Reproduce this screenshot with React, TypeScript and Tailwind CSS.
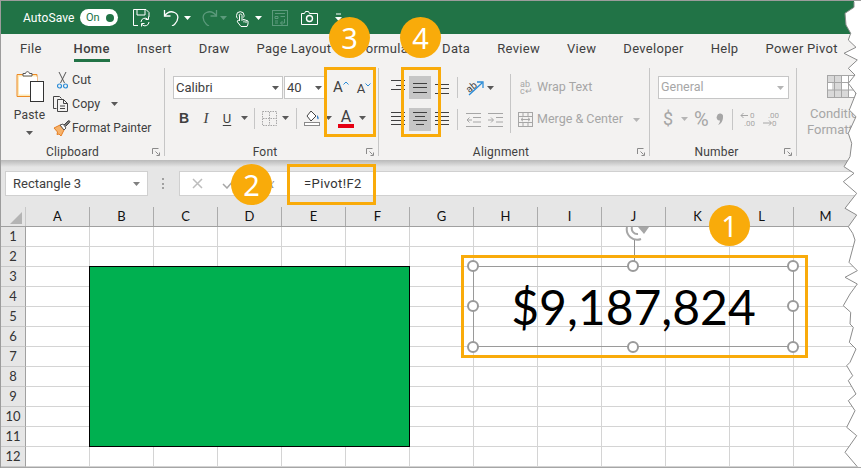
import React from "react";

const UI = "font-['Roboto','Noto_Sans',sans-serif]";
const cols = ["A","B","C","D","E","F","G","H","I","J","K","L","M","N"];
const rows = [1,2,3,4,5,6,7,8,9,10,11,12];

const Caret = ({ c = "#595959", cls = "" }: { c?: string; cls?: string }) => (
  <svg width="7" height="4" viewBox="0 0 7 4" className={cls}><path d="M0 0h7L3.500 4z" fill={c} /></svg>
);

const Launcher = () => (
  <svg width="8" height="8" viewBox="0 0 8 8" fill="none" stroke="#8a8a8a"><path d="M.5 6V.5H6.500" /><path d="M3.500 3.500l3 3M7.500 4.500v3h-3" /></svg>
);

const Lines = ({ ys, aligns, c = "#404040", w = 14 }: { ys: number[]; aligns: [number, number][]; c?: string; w?: number }) => (
  <svg width={w} height="20" viewBox={`0 0 ${w} 20`} stroke={c}>
    {ys.map((y, i) => <path key={i} d={`M${aligns[i][0]} ${y + 0.5}H${aligns[i][1]}`} />)}
  </svg>
);

const Group = ({ w, label, pr, children }: { w: string; label: string; pr: string; children: React.ReactNode }) => (
  <div className={`flex flex-col shrink-0 ${w}`}>
    <div className="h-[80px] flex">{children}</div>
    <div className="h-[16px] flex items-center">
      <div className={`flex-1 text-center text-[12px] tracking-[0.2px] leading-none text-[#404040] ${pr}`}>{label}</div>
      <div className="w-[8px] mr-[4px] flex"><Launcher /></div>
    </div>
  </div>
);

const Sep = () => <div className="w-px h-[88px] mt-[4px] bg-[#c6c6c6] shrink-0" />;
const SmallSep = ({ cls }: { cls: string }) => <div className={`w-px h-[21px] bg-[#c6c6c6] shrink-0 ${cls}`} />;

const TitleBar = () => (
  <div className="h-[33px] bg-[#217346] flex items-center shrink-0 text-white">
    <span className="ml-[22px] w-[50px] text-[12px] tracking-[0.1px] leading-none whitespace-nowrap">AutoSave</span>
    <div className="ml-[7px] w-[38px] h-[17px] rounded-full bg-white flex items-center justify-between pl-[6px] pr-[4px]">
      <span className="text-[11px] leading-none text-[#217346]">On</span>
      <span className="w-[8px] h-[8px] rounded-full bg-[#217346]" />
    </div>
    <svg className="ml-[15px]" width="17" height="18" viewBox="0 0 17 18" fill="none" stroke="#fff">
      <path d="M5 16.500H.5V.5H13l3 3V8" /><path d="M4 .5V6h8V.5" /><path d="M8 13a4 4 0 0 1 7-2.500M16 13a4 4 0 0 1-7 2.500" /><path d="M15.500 7.500v3h-3M8.500 17.500v-3h3" />
    </svg>
    <svg className="ml-[13px]" width="17" height="17" viewBox="0 0 17 17" fill="none" stroke="#fff" strokeWidth="1.300">
      <path d="M1.500 1v6h6" /><path d="M1.500 7C4 3.500 8 2 11.500 3.500c4.500 2 4.500 7.500 0 12L9 17" />
    </svg>
    <Caret c="#fff" cls="ml-[4px]" />
    <svg className="ml-[10px]" width="17" height="17" viewBox="0 0 17 17" fill="none" stroke="#5c9a7c" strokeWidth="1.300">
      <path d="M15.500 1v6h-6" /><path d="M15.500 7C13 3.500 9 2 5.500 3.500c-4.500 2-4.500 7.500 0 12L8 17" />
    </svg>
    <Caret c="#5c9a7c" cls="ml-[2px]" />
    <svg className="ml-[7px]" width="16" height="18" viewBox="0 0 16 18" fill="none" stroke="#fff">
      <path d="M3.500 9.500a4 4 0 0 1-1-3 3.800 3.800 0 0 1 7.600 0 4 4 0 0 1-.6 2" /><path d="M5 6.500c0-2 3-2 3 0v5l1-1 1 0 4 1.500V15l-1 2.500H7L3.500 13c-.8-1.500 1-2.500 2-1V6.500z" fill="#217346" /><path d="M10 11.500v2M12 12v2" />
    </svg>
    <Caret c="#fff" cls="ml-[5px]" />
    <svg className="ml-[10px]" width="16" height="16" viewBox="0 0 16 16" fill="none" stroke="#5c9a7c">
      <rect x=".5" y=".5" width="15" height="15" /><path d="M3 3.500h10M3 6.500h3v2H3zM8.500 6.500H13M3 11h3M3 13h3M12.500 9v4H8.500M10.500 11l-2 2 2 2" />
    </svg>
    <svg className="ml-[13px]" width="17" height="14" viewBox="0 0 17 14" fill="none" stroke="#fff">
      <path d="M.5 2.500h3l1-2h3l1 2h8v11H.5z" /><circle cx="8.500" cy="7.500" r="3" strokeWidth="1.400" />
    </svg>
    <svg className="ml-[17px]" width="7" height="9" viewBox="0 0 7 9"><path d="M1 .5h5V1.500H1z M0 4h7L3.500 8z" fill="#fff" /></svg>
  </div>
);

const Tabs = () => (
  <div className="h-[30px] flex items-start shrink-0 text-[13px] leading-none text-[#404040] pl-[19px] tracking-[0.3px] whitespace-nowrap">
    <span className="mt-[8px] mr-[32px]">File</span>
    <div className="flex gap-[27px]">
      <div className="flex flex-col h-[28px] pt-[8px] border-b-[3px] border-[#217346] font-medium text-[#404040]">Home</div>
      {["Insert","Draw","Page Layout","Formulas","Data","Review","View","Developer","Help","Power Pivot"].map(t => <span key={t} className="mt-[8px]">{t}</span>)}
    </div>
  </div>
);

const Clipboard = () => (
  <Group w="w-[163px]" label="Clipboard" pr="pr-[8px]">
    <div className="w-[52px] pl-[5px] flex flex-col items-center pt-[6px] shrink-0">
      <svg width="28" height="32" viewBox="0 0 28 32" fill="none">
        <path d="M1 4.500h20v22H1z" fill="#fde9b8" stroke="#ed8a24" />
        <path d="M3 6.500h18v18H3z" fill="#fff" />
        <path d="M7 6V3.500h2.500c.5-2.500 3.500-2.500 4 0H16V6H7z" fill="#fff" stroke="#555" />
        <rect x="14.500" y="11.500" width="13" height="20" fill="#fff" stroke="#333" />
      </svg>
      <span className="text-[12px] tracking-[0.2px] leading-none mt-[7px] text-[#404040]">Paste</span>
      <Caret cls="mt-[10px]" />
    </div>
    <div className="flex flex-col pt-[4px] text-[12px] leading-none text-[#404040]">
      <div className="h-[24px] flex items-center">
        <div className="w-[19px] flex justify-center">
          <svg width="11" height="17" viewBox="0 0 11 17" fill="none"><path d="M2 0l5.500 11M9 0L3.500 11" stroke="#555" /><circle cx="2.500" cy="14" r="2" stroke="#2b8cd6" strokeWidth="1.200" /><circle cx="8.500" cy="14" r="2" stroke="#2b8cd6" strokeWidth="1.200" /></svg>
        </div>
        <span className="text-[12.5px]">Cut</span>
      </div>
      <div className="h-[24px] flex items-center">
        <div className="w-[19px]">
          <svg width="16" height="16" viewBox="0 0 16 16" fill="none" stroke="#444"><path d="M3.500 12.500H.5V.5h6l2 2" /><path d="M4.500 3.500h6l4 4v8h-10zM10.500 3.500v4h4M7 10h5M7 12.500h5" /></svg>
        </div>
        <span className="text-[12.5px]">Copy</span>
        <Caret cls="ml-[11px]" />
      </div>
      <div className="h-[24px] flex items-center">
        <div className="w-[19px]">
          <svg width="18" height="16" viewBox="0 0 18 16" fill="none"><path d="M1 8l6-3 4 5-3 6-2-2-2 .5.5-2.500z" fill="#f6b26b" stroke="#e67e22" /><path d="M7 5l4 5 2-2-3-4z" fill="#fff" stroke="#555" /><path d="M11 5l4-4c1.500-1 2.500.5 1.500 1.500l-4 4" fill="#777" stroke="#444" /></svg>
        </div>
        <span className="whitespace-nowrap">Format Painter</span>
      </div>
    </div>
  </Group>
);

const Font = () => (
  <Group w="w-[213px]" label="Font" pr="pr-[1px]">
    <div className="flex flex-col pt-[12px] pl-[8px]">
      <div className="flex items-center">
        <div className="w-[110px] h-[23px] bg-white border border-[#c6c6c6] flex items-center justify-between pl-[2px] pr-[3px] text-[13px] text-[#404040]">
          <span>Calibri</span><Caret />
        </div>
        <div className="ml-px w-[40px] h-[23px] bg-white border border-[#c6c6c6] border-r-0 flex items-center justify-between pl-[2px] pr-[2px] text-[13px] text-[#404040]">
          <span>40</span><Caret />
        </div>
        <div className="ml-[9px] flex items-start text-[15px] leading-none text-[#404040]">
          <span>A</span>
          <svg className="mt-[1px]" width="6" height="4" viewBox="0 0 6 4" fill="none" stroke="#2b8cd6"><path d="M.5 3.500L3 1l2.500 2.500" /></svg>
        </div>
        <div className="ml-[8px] flex items-start text-[13px] leading-none text-[#404040] pt-[1px]">
          <span>A</span>
          <svg className="mt-[1px]" width="6" height="4" viewBox="0 0 6 4" fill="none" stroke="#2b8cd6"><path d="M.5 .5L3 3l2.500-2.500" /></svg>
        </div>
      </div>
      <div className="flex items-center h-[22px] mt-[8px] -ml-[8px] pl-[10px] text-[#404040]">
        <span className="w-[18px] text-center font-['Liberation_Sans'] font-bold text-[14px] leading-none">B</span>
        <span className="w-[18px] ml-[4px] text-center font-['Liberation_Serif'] italic text-[15px] leading-none">I</span>
        <span className="w-[18px] ml-[3px] text-center text-[13px] leading-none underline underline-offset-2">U</span>
        <Caret cls="ml-[5px]" />
        <SmallSep cls="ml-[6px]" />
        <svg className="ml-[7px]" width="15" height="15" viewBox="0 0 15 15" fill="none" stroke="#a6a6a6" strokeDasharray="1.500 1"><rect x=".5" y=".5" width="14" height="14" /><path d="M7.500 1v13M1 7.500h13" /></svg>
        <Caret cls="ml-[5px]" />
        <SmallSep cls="ml-[7px]" />
        <svg className="ml-[7px]" width="16" height="16" viewBox="0 0 16 16" fill="none"><path d="M7 1l5 5-5 5-4-5z" stroke="#444" fill="#fff" /><path d="M13 5c2 2 2 4 1 4.500-1-.5-1-2.500-1-4.500z" fill="#2b78c2" /><rect x=".5" y="12.500" width="15" height="3" stroke="#8a8a8a" fill="#fff" /></svg>
        <Caret cls="ml-[5px]" />
        <div className="ml-[6px] flex flex-col items-center w-[16px]">
          <span className="text-[16px] leading-[15px] text-[#404040]">A</span>
          <div className="w-[16px] h-[4px] bg-[#e60012]" />
        </div>
        <Caret cls="ml-[5px]" />
      </div>
    </div>
  </Group>
);

const Alignment = () => {
  const full: [number, number] = [0, 14];
  return (
    <Group w="w-[270px]" label="Alignment" pr="pr-[14px]">
      <div className="flex flex-col pt-[12px] pl-[12px] shrink-0">
        <div className="flex items-center h-[23px]">
          <div className="-mt-[2px] flex"><Lines ys={[3, 8, 12]} aligns={[full, [5, 14], full]} /></div>
          <div className="ml-[4px] w-[22px] h-[23px] bg-[#c6c6c6] flex items-center justify-center"><Lines ys={[5, 9, 14]} aligns={[full, full, full]} /></div>
          <div className="ml-[4px] flex"><Lines ys={[6, 10, 15]} aligns={[full, [4, 14], full]} /></div>
          <SmallSep cls="ml-[8px]" />
          <svg className="ml-[8px]" width="22" height="18" viewBox="0 0 22 18" fill="none"><text x="0" y="11" fontSize="10" fill="#404040" transform="rotate(-40 6 8)">ab</text><path d="M3 16L16 4M11 3h6v6" stroke="#2b8cd6" strokeWidth="1.300" /></svg>
          <Caret cls="ml-[-1px]" />
        </div>
        <div className="flex items-center h-[23px] mt-[9px]">
          <Lines ys={[2, 6, 10, 14]} aligns={[full, [0, 14], full, [0, 14]]} />
          <div className="ml-[4px] w-[22px] h-[23px] bg-[#c6c6c6] flex items-center justify-center"><Lines ys={[2, 6, 10, 14]} aligns={[full, [2, 12], full, [3, 11]]} /></div>
          <div className="ml-[4px]"><Lines ys={[2, 6, 10, 14]} aligns={[full, [0, 14], full, [0, 14]]} /></div>
          <SmallSep cls="ml-[8px]" />
          <svg className="ml-[8px]" width="15" height="14" viewBox="0 0 15 14" fill="none" stroke="#a6a6a6"><path d="M0 .5h15M7 4.500h8M7 9h8M0 13.500h15M6 7H1M3.500 4.500L1 7l2.500 2.500" /></svg>
          <svg className="ml-[7px]" width="15" height="14" viewBox="0 0 15 14" fill="none" stroke="#a6a6a6"><path d="M0 .5h15M8 4.500h7M8 9h7M0 13.500h15M0 7h5M3 4.500L5.500 7 3 9.500" /></svg>
        </div>
      </div>
      <div className="w-px h-[59px] bg-[#c6c6c6] mt-[10px] ml-[7px] shrink-0" />
      <div className="flex flex-col pt-[12px] text-[12.5px] leading-none text-[#a6a6a6] pl-[7px]">
        <div className="flex items-center h-[23px] whitespace-nowrap">
          <span className="ml-[2px] w-[17px] text-[9px] leading-[7px]">ab<br />c↵</span>
          <span>Wrap Text</span>
        </div>
        <div className="flex items-center h-[23px] mt-[9px] whitespace-nowrap">
          <svg className="mr-[4px]" width="15" height="15" viewBox="0 0 15 15" fill="none" stroke="#a6a6a6"><rect x=".5" y=".5" width="14" height="14" /><path d="M1 4.500h13M1 10.500h13M5 1v3.500M10 1v3.500M5 10.500V14M10 10.500V14M3 7.500h9M5 5.800L3 7.500l2 1.700M10 5.800l2 1.700-2 1.700" /></svg>
          <span>Merge &amp; Center</span>
          <Caret c="#b5b5b5" cls="ml-[10px]" />
        </div>
      </div>
    </Group>
  );
};

const NumberGroup = () => (
  <Group w="w-[146px]" label="Number" pr="pr-[1px]">
    <div className="flex flex-col pt-[12px] pl-[8px] text-[#a6a6a6]">
      <div className="w-[131px] h-[23px] bg-white border border-[#c6c6c6] flex items-center justify-between pl-[2px] pr-[4px] text-[12.5px]">
        <span>General</span><Caret c="#b5b5b5" />
      </div>
      <div className="flex items-center h-[22px] mt-[9px]">
        <span className="ml-[5px] w-[10px] text-[18px] leading-none">$</span>
        <Caret c="#b5b5b5" cls="ml-[8px]" />
        <span className="ml-[6px] w-[17px] text-[20px] leading-none">%</span>
        <svg className="ml-[5px]" width="8" height="13" viewBox="0 0 8 13"><path d="M1 3a3 3 0 1 1 6 1c0 4-2 7-5 8 1.500-2 2-3 2-4.500A3 3 0 0 1 1 3z" fill="#a6a6a6" /></svg>
        <SmallSep cls="ml-[8px]" />
        <svg className="ml-[7px]" width="16" height="16" viewBox="0 0 16 16" fill="none" stroke="#a6a6a6"><path d="M8 4.500H1M3.500 2L1 4.500 3.500 7" /><text x="10" y="7" fontSize="8" fill="#a6a6a6" stroke="none">0</text><text x="4" y="15" fontSize="8" fill="#a6a6a6" stroke="none">.00</text></svg>
        <svg className="ml-[7px]" width="16" height="16" viewBox="0 0 16 16" fill="none" stroke="#a6a6a6"><text x="5" y="7" fontSize="8" fill="#a6a6a6" stroke="none">.00</text><path d="M0 12h8M6 9.500L8.500 12 6 14.500" /><text x="9" y="15" fontSize="8" fill="#a6a6a6" stroke="none">0</text></svg>
      </div>
    </div>
  </Group>
);

const Styles = () => (
  <div className="ml-[10px] flex flex-col text-[13px] leading-none text-[#a6a6a6] whitespace-nowrap">
    <svg className="ml-[20px] mt-[11px]" width="29" height="23" viewBox="0 0 29 23" fill="none" stroke="#a6a6a6">
      <rect x=".5" y=".5" width="28" height="22" fill="#fff" />
      <path d="M1 1h14v7H1z M5 8h9v7H5z M1 15h20v7H1z" fill="#d9d9d9" stroke="none" />
      <path d="M1 7.500h28M1 15h28M7.500 1v22M14.500 1v22M21.500 1v22" />
    </svg>
    <span className="ml-[3px] mt-[9px]">Conditional</span>
    <span className="mt-[3px]">Formatting</span>
  </div>
);

const FormulaBar = () => (
  <div className="h-[40px] bg-[#e6e6e6] flex items-start pt-[4px] shrink-0 pl-[4px]">
    <div className="w-[143px] h-[25px] bg-white border border-[#d0d0d0] flex items-center justify-between pl-[7px] pr-[7px] text-[13px] text-[#404040]">
      <span>Rectangle 3</span><Caret c="#808080" />
    </div>
    <svg className="ml-[13px] mt-[6px]" width="4" height="13" viewBox="0 0 4 13"><path d="M1 1h2v2H1zM1 6h2v2H1zM1 10h2v2H1z" fill="#a0a0a0" /></svg>
    <div className="ml-[14px] w-[113px] h-[25px] bg-white border border-[#d0d0d0] flex items-center pl-[12px]">
      <svg width="11" height="11" viewBox="0 0 11 11" stroke="#bdbdbd" strokeWidth="1.500"><path d="M1 1l9 9M10 1l-9 9" /></svg>
      <svg className="ml-[19px]" width="13" height="10" viewBox="0 0 13 10" fill="none" stroke="#a6a6a6" strokeWidth="1.500"><path d="M1 5l4 4 7-8" /></svg>
      <span className="ml-[29px] font-['Liberation_Serif'] italic text-[14px] leading-none text-[#8a8a8a]">fx</span>
    </div>
    <div className="ml-[-1px] flex-1 h-[25px] bg-white border-y border-[#d0d0d0] flex items-center pl-[13px] text-[13px] tracking-[0.4px] leading-none text-[#333]">=Pivot!F2</div>
  </div>
);

const Sheet = () => (
  <div className="flex flex-col bg-white border-b-2 border-[#a6a6a6]">
    <div className="flex h-[20px] bg-[#e6e6e6] border-b border-[#a0a0a0] items-stretch font-['Lato'] text-[13px] leading-none text-[#111] overflow-hidden">
      <div className="w-[25px] shrink-0 border-r border-[#c8c8c8] flex items-end justify-end pr-[3px] pb-[2px]">
        <svg width="12" height="12" viewBox="0 0 12 12"><path d="M12 0v12H0z" fill="#b4b4b4" /></svg>
      </div>
      {cols.map(c => (
        <div key={c} className="w-[64px] shrink-0 border-r border-[#ababab] flex items-center justify-center">{c}</div>
      ))}
    </div>
    {rows.map(r => (
      <div key={r} className="flex h-[20px]">
        <div className="w-[25px] shrink-0 bg-[#e6e6e6] border-r border-b border-r-[#a0a0a0] border-b-[#c8c8c8] flex items-center justify-center font-['Lato'] text-[13px] leading-none text-[#333]">{r}</div>
        {cols.map(c => <div key={c} className="w-[64px] shrink-0 border-r border-b border-[#d4d4d4]" />)}
      </div>
    ))}
  </div>
);

const Badge = ({ n, cls }: { n: number; cls: string }) => (
  <div className={`absolute w-[41px] h-[41px] rounded-full bg-[#f9ab0a] text-white flex items-center justify-center font-['Noto_Sans'] text-[29px] leading-none ${cls}`}>{n}</div>
);

const edge: [number, number][] = [
  [222,5],[222,22],[195,40],[198,75],[212,100],[205,120],[228,142],[192,160],[232,180],[205,205],[225,225],[205,250],[228,280],[208,330],[228,350],[205,400],[215,430],[210,470],[192,500],[222,520],[190,545],[230,580],[195,625],[230,645],[205,680],[218,700],
];
const edge2: [number, number][] = [
  [225,720],[207,787],[232,812],[195,832],[232,852],[210,882],[190,917],[212,937],[210,972],[220,982],[208,1027],[228,1047],[210,1087],[200,1097],[218,1127],[205,1142],[228,1182],[205,1202],[225,1232],[200,1282],[230,1307],[195,1357],[232,1400],
];
const torn = [...edge, ...edge2].map(([x, y]) => `${(x / 3).toFixed(1)},${(y / 3).toFixed(1)}`).join(" ");

export default function App() {
  return (
    <div className={`relative w-[861px] h-[468px] overflow-hidden bg-white border-l border-t border-[#9c9c9c] flex flex-col ${UI}`}>
      <TitleBar />
      <div className="h-[126px] bg-[#f3f2f1] shrink-0 flex flex-col overflow-hidden">
        <Tabs />
        <div className="flex h-[96px]">
          <Clipboard /><Sep /><Font /><Sep /><Alignment /><Sep /><NumberGroup /><Sep /><Styles />
        </div>
      </div>
      <div className="h-[7px] bg-gradient-to-b from-[#b9b9b9] to-[#e6e6e6] shrink-0" />
      <FormulaBar />
      <Sheet />

      {/* shapes on the sheet */}
      <div className="absolute left-[88px] top-[265px] w-[321px] h-[181px] bg-[#00b050] border border-black" />
      <svg className="absolute left-[600px] top-[226px]" width="60" height="40" viewBox="600 227 60 40" fill="none">
        <path d="M626 227a10.500 10.500 0 0 0 14 12" stroke="#a6a6a6" strokeWidth="2" />
        <path d="M631 227a5.500 5.500 0 0 0 6 7" stroke="#a6a6a6" strokeWidth="2" />
        <path d="M637 227h11l-5 7z" fill="#a6a6a6" />
        <path d="M633.500 240V266" stroke="#8f8f8f" strokeWidth="1" />
      </svg>
      <div className="absolute left-[472px] top-[265px] w-[321px] h-[81px] border border-[#9a9a9a] flex items-center justify-center">
        <span className="font-['Lato'] text-[48px] leading-none text-black">$9,187,824</span>
      </div>
      {[
        "left-[466px] top-[259px]", "left-[626px] top-[259px]", "left-[786px] top-[259px]",
        "left-[466px] top-[299px]", "left-[786px] top-[299px]",
        "left-[466px] top-[340px]", "left-[626px] top-[340px]", "left-[786px] top-[340px]",
      ].map(p => <div key={p} className={`absolute w-[12px] h-[12px] rounded-full bg-white border-2 border-[#9a9a9a] ${p}`} />)}

      {/* callout frames */}
      <div className="absolute left-[460px] top-[254px] w-[347px] h-[103px] border-[3px] border-[#f9ab0a]" />
      <div className="absolute left-[286px] top-[163px] w-[89px] h-[41px] border-[3px] border-[#f9ab0a]" />
      <div className="absolute left-[323px] top-[66px] w-[52px] h-[70px] border-[3px] border-[#f9ab0a]" />
      <div className="absolute left-[400px] top-[66px] w-[40px] h-[70px] border-[3px] border-[#f9ab0a]" />
      <Badge n={3} cls="left-[328px] top-[16px]" />
      <Badge n={4} cls="left-[399px] top-[16px]" />
      <Badge n={2} cls="left-[230px] top-[163px]" />
      <Badge n={1} cls="left-[708px] top-[204px]" />

      {/* torn paper edge */}
      <svg className="absolute left-[779px] top-[-1px]" width="82" height="468" viewBox="0 0 82 468">
        <polygon points={`${torn} 82,467 82,0 74,0`} fill="#fff" />
        <polyline points={torn} fill="none" stroke="#8c8c8c" strokeWidth="1" />
      </svg>
    </div>
  );
}
